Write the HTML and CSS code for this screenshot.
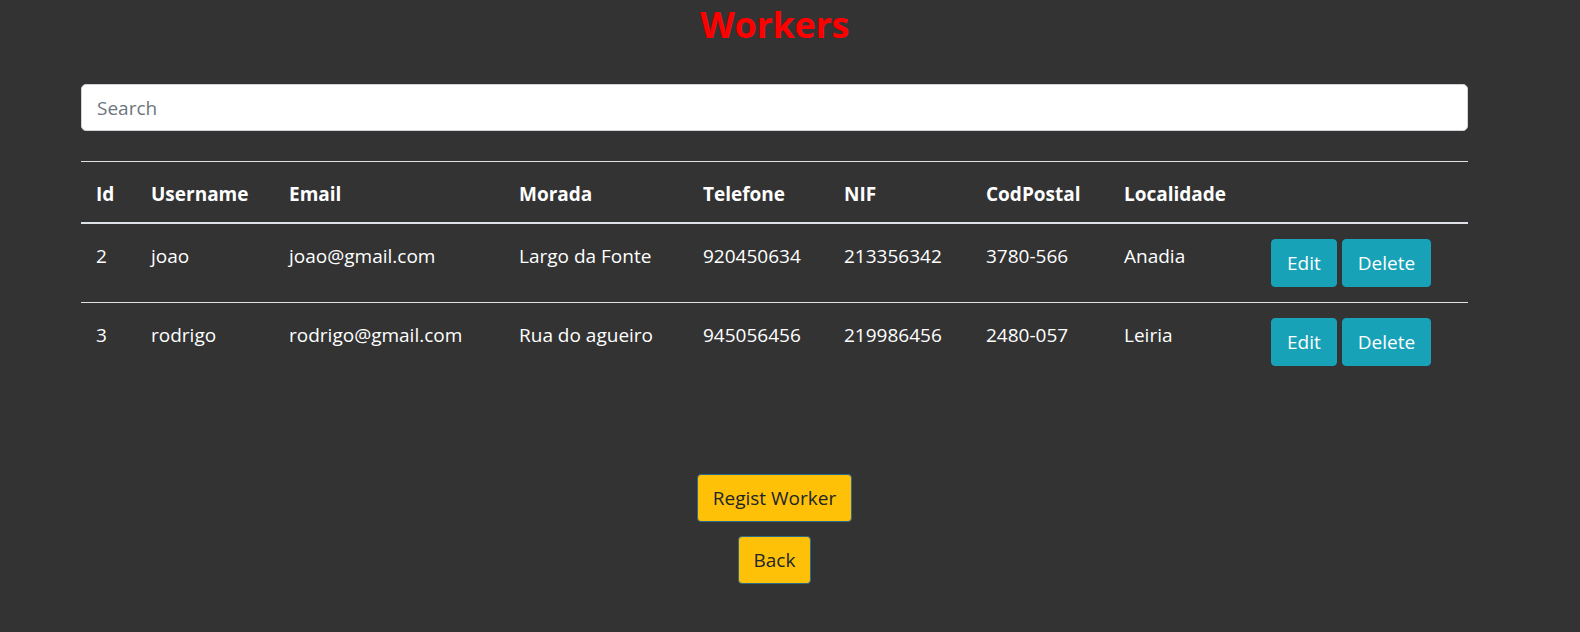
FILE: index.html
```html
<!DOCTYPE html>
<html lang="pt">
<head>
<meta charset="utf-8">
<title>Workers</title>
<link rel="stylesheet" href="styles.css">
</head>
<body>
<div class="page">
  <h2 class="title">Workers</h2>
  <input class="search" type="text" placeholder="Search">
  <table class="table">
    <thead>
      <tr>
        <th class="c-id">Id</th>
        <th class="c-user">Username</th>
        <th class="c-email">Email</th>
        <th class="c-morada">Morada</th>
        <th class="c-tel">Telefone</th>
        <th class="c-nif">NIF</th>
        <th class="c-cod">CodPostal</th>
        <th class="c-loc">Localidade</th>
        <th class="c-act"></th>
      </tr>
    </thead>
    <tbody>
      <tr>
        <td>2</td>
        <td>joao</td>
        <td>joao@gmail.com</td>
        <td>Largo da Fonte</td>
        <td>920450634</td>
        <td>213356342</td>
        <td>3780-566</td>
        <td>Anadia</td>
        <td class="actions"><button class="btn btn-info">Edit</button><button class="btn btn-info">Delete</button></td>
      </tr>
      <tr>
        <td>3</td>
        <td>rodrigo</td>
        <td>rodrigo@gmail.com</td>
        <td>Rua do agueiro</td>
        <td>945056456</td>
        <td>219986456</td>
        <td>2480-057</td>
        <td>Leiria</td>
        <td class="actions"><button class="btn btn-info">Edit</button><button class="btn btn-info">Delete</button></td>
      </tr>
    </tbody>
  </table>
  <div class="bottom">
    <button class="btn btn-warning">Regist Worker</button>
    <button class="btn btn-warning">Back</button>
  </div>
</div>
</body>
</html>
```
FILE: styles.css
```css
* { box-sizing: border-box; }
html, body { margin: 0; padding: 0; }
body {
  background: #333333;
  color: #ffffff;
  font-family: "Open Sans", "Noto Sans", sans-serif;
  font-size: 19px;
  line-height: 30px;
  width: 1580px;
  height: 632px;
  overflow: hidden;
}
.page {
  width: 1387px;
  margin-left: 81px;
  display: flex;
  flex-direction: column;
}
.title {
  margin: 0;
  padding-top: 2px;
  text-align: center;
  color: #ff0000;
  font-weight: 700;
  font-size: 36px;
  line-height: 46px;
  height: 48px;
  letter-spacing: -0.3px;
}
.search {
  margin-top: 36px;
  width: 100%;
  height: 47px;
  padding: 7px 15px;
  border: 1px solid #ced4da;
  border-radius: 5px;
  background: #ffffff;
  font-family: inherit;
  font-size: 19px;
  color: #495057;
  outline: none;
}
.search::placeholder { color: #6c757d; }
.table {
  margin-top: 30px;
  width: 100%;
  border-collapse: collapse;
  table-layout: fixed;
}
.table th, .table td {
  text-align: left;
  vertical-align: top;
  padding: 15px 15px;
  border-top: 1px solid #dee2e6;
  white-space: nowrap;
}
.table thead th {
  font-weight: 700;
  border-bottom: 2px solid #dee2e6;
  padding-top: 17px;
  padding-bottom: 13px;
}
.table td { padding-top: 17px; padding-bottom: 13px; }
.table td.actions { padding-top: 15px; padding-bottom: 15px; }
.c-id { width: 55px; }
.c-user { width: 138px; }
.c-email { width: 230px; }
.c-morada { width: 184px; }
.c-tel { width: 141px; }
.c-nif { width: 142px; }
.c-cod { width: 138px; }
.c-loc { width: 147px; }
.c-act { width: auto; }
.btn {
  font-family: inherit;
  font-size: 19px;
  line-height: 30px;
  padding: 8px 15px;
  border-radius: 4px;
  border: 1px solid transparent;
  cursor: pointer;
}
.actions .btn + .btn { margin-left: 5px; }
.btn-info {
  background: #17a2b8;
  border-color: #17a2b8;
  color: #ffffff;
}
.btn-warning {
  background: #ffc107;
  border-color: #2c6a8a;
  color: #212529;
}
.bottom {
  margin-top: 93px;
  display: flex;
  flex-direction: column;
  align-items: center;
  gap: 14px;
}
```
